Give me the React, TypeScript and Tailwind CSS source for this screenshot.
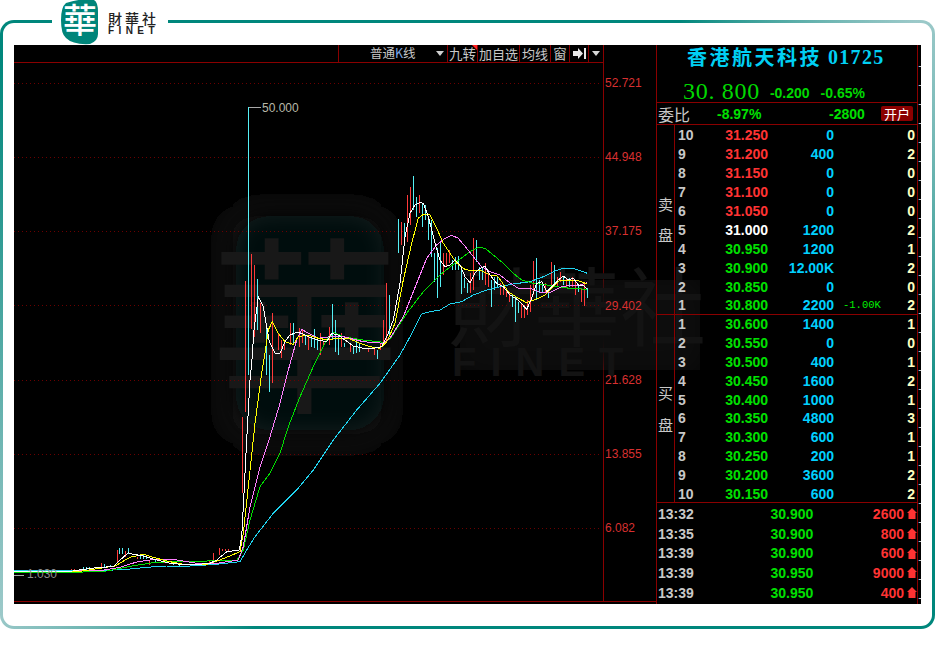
import React from "react";

type P = [number, number];
type C = [number, number, number, number];
const m = (ox: number, oy: number, pts: P[]): P[] => pts.map(([a, b]) => [ox + a / 3, oy + b / 3]);
const z5 = (p: P[]) => m(230, 170, p);
const z6 = (p: P[]) => m(390, 170, p);
const z7 = (p: P[]) => m(0, 510, p);
const z10 = (p: P[]) => m(200, 340, p);
const toStr = (p: P[]) => p.map(([a, b]) => `${a.toFixed(1)},${b.toFixed(1)}`).join(" ");

const white = [
  ...z7([[42,186],[220,183],[250,178],[300,172],[340,170],[355,155],[385,128],[400,133],[430,138],[470,150],[510,160],[570,165],[630,160],[650,150],[680,125],[718,120]]),
  ...z10([[125,590],[130,500],[140,300],[150,120]]),
  ...z5([[65,580],[72,480],[85,380],[100,410],[110,470],[118,515],[135,550],[150,550],[165,515],[180,495],[200,487],[215,490],[235,500],[265,510],[290,515],[305,490],[325,495],[345,510],[370,528],[400,535],[430,535],[455,530],[475,490]]),
  ...z6([[10,450],[30,340],[45,200],[60,130],[75,105],[90,97],[100,100],[115,140],[135,220],[150,270],[165,290],[180,285],[195,270],[210,285],[225,320],[240,338],[255,310],[270,295],[285,288],[300,315],[320,340],[340,350],[360,375],[385,390],[410,418],[425,385],[440,340],[455,335],[470,365],[485,350],[505,330],[520,318],[535,330],[550,325],[565,345],[580,345],[592,358]]),
];
const yellow = [
  ...z7([[42,186],[240,184],[300,175],[345,168],[390,142],[430,133],[470,145],[510,155],[560,165],[620,163],[660,150],[720,125]]),
  ...z10([[130,580],[145,440],[165,250],[185,100]]),
  ...z5([[105,550],[115,480],[127,455],[145,490],[165,515],[190,523],[205,500],[235,495],[265,505],[295,510],[320,505],[355,505],[390,520],[420,530],[450,535],[470,515]]),
  ...z6([[0,495],[15,460],[40,330],[65,220],[85,145],[100,133],[120,135],[140,175],[160,220],[180,250],[200,280],[225,298],[245,303],[270,300],[290,310],[300,315],[320,316],[335,335],[355,365],[385,385],[410,398],[425,392],[445,385],[465,375],[485,355],[510,330],[530,330],[565,332],[592,342]]),
];
const pink = [
  ...z7([[42,186],[300,182],[360,172],[410,156],[470,147],[530,150],[590,160],[650,160],[715,150]]),
  ...z10([[130,620],[150,500],[180,380],[210,290],[240,190],[265,90],[290,0]]),
  ...z5([[215,478],[235,490],[265,505],[300,500],[340,500],[400,515],[460,520]]),
  ...z6([[0,505],[40,440],[80,340],[110,265],[140,225],[165,205],[185,196],[205,205],[230,235],[250,260],[275,290],[300,305],[330,315],[355,335],[385,355],[420,355],[450,367],[480,368],[510,352],[540,345],[570,345],[592,338]]),
];
const green = [
  ...z7([[42,186],[250,186],[320,183],[400,167],[460,158],[540,153],[620,153],[710,152]]),
  ...z10([[130,630],[150,540],[180,440],[210,400],[240,340],[265,260],[300,170],[340,80],[380,0]]),
  ...z5([[300,500],[310,487],[340,500],[400,510],[460,517]]),
  ...z6([[0,507],[50,430],[100,365],[150,315],[200,275],[240,245],[265,232],[285,235],[310,255],[340,280],[370,310],[395,330],[430,340],[470,345],[500,350],[540,355],[592,358]]),
];
const cyan = [
  ...z7([[42,183],[300,182],[380,178],[440,172],[500,168],[570,168],[650,163],[720,155]]),
  ...z10([[140,630],[165,590],[220,520],[290,450],[340,390],[400,300],[470,210],[540,130],[600,45]]),
  ...z6([[55,510],[95,432],[120,425],[150,420],[180,402],[215,395],[250,375],[290,360],[330,350],[370,342],[420,335],[460,320],[490,305],[520,295],[550,295],[592,310]]),
];

const c5: C[] = [[46,333,690,0],[64,252,478,0],[73,285,500,0],[82,327,480,1],[91,400,488,0],[109,478,615,1],[118,555,665,1],[127,430,640,0],[145,490,540,0],[154,510,565,0],[163,515,540,0],[181,460,525,0],[190,460,520,1],[208,475,530,0],[217,480,520,0],[226,495,525,1],[235,495,540,0],[244,500,530,1],[253,478,535,1],[262,510,540,1],[271,490,555,0],[280,515,530,0],[298,470,525,0],[307,402,510,1],[316,450,545,1],[325,500,555,1],[334,490,530,0],[343,520,530,1],[361,525,545,0],[370,530,553,1],[379,515,548,1],[388,520,545,1],[415,535,545,0],[433,530,555,0],[442,540,567,1],[451,520,540,0],[460,450,520,0],[469,340,510,0],[478,375,500,1]];
const c6: C[] = [[7,305,385,0],[16,135,275,0],[25,148,250,1],[34,155,225,0],[43,160,215,1],[52,75,215,0],[61,50,165,0],[70,18,120,1],[79,80,140,1],[88,75,130,0],[97,100,170,1],[106,105,150,1],[115,140,210,1],[124,150,260,1],[133,250,335,1],[142,235,383,1],[151,220,350,1],[160,248,315,0],[169,250,290,0],[178,240,280,0],[187,270,300,1],[196,260,300,1],[205,258,300,1],[214,295,372,1],[223,325,355,1],[232,340,370,1],[241,310,370,0],[250,205,360,0],[259,210,275,1],[268,290,330,1],[277,290,330,1],[286,278,345,0],[295,310,350,0],[304,330,412,1],[313,320,360,1],[322,320,355,1],[331,340,375,0],[340,350,375,0],[349,355,380,0],[358,365,395,0],[367,375,410,1],[376,380,455,1],[385,395,430,1],[394,400,445,0],[403,405,445,0],[412,390,435,0],[421,345,425,0],[430,272,375,0],[439,265,390,1],[448,330,370,1],[457,335,365,1],[466,340,370,0],[475,360,385,1],[484,275,345,0],[493,285,350,1],[502,320,350,0],[511,305,335,0],[520,320,345,1],[529,325,350,0],[538,325,350,1],[547,320,350,0],[556,335,375,0],[565,345,365,1],[574,355,395,0],[583,340,407,0],[592,355,385,1]];
const c7: C[] = [[214,178,186,0],[223,178,186,0],[250,172,180,1],[259,172,180,1],[268,172,180,1],[304,158,175,0],[313,162,170,1],[331,164,172,1],[350,120,160,0],[358,114,132,1],[367,114,132,1],[376,122,140,0],[385,114,132,1],[412,140,148,0],[421,136,146,1],[430,136,146,1],[439,138,146,1],[448,150,164,0],[466,148,156,1],[493,152,160,0],[520,160,166,1],[538,162,168,1],[600,160,166,1],[628,150,160,0],[638,130,152,0],[656,115,136,0],[665,118,122,0],[674,118,122,0],[683,118,122,0]];

const bars = [
  ...c7.map(([x, t, b, k]): C => [Math.round(x / 3) + 0.5, 510 + t / 3, 510 + b / 3, k]),
  ...c5.map(([x, t, b, k]): C => [Math.round(230 + x / 3) + 0.5, 170 + t / 3, 170 + b / 3, k]),
  ...c6.slice(2).map(([x, t, b, k]): C => [Math.round(390 + x / 3) + 0.5, 170 + t / 3, 170 + b / 3, k]),
  [242.5, 417, 493, 0] as C,
  [245.5, 340, 412, 0] as C,
  [248.5, 107, 375, 1] as C,
];

const axis = ["52.721", "44.948", "37.175", "29.402", "21.628", "13.855", "6.082"];
const gridY = [83.5, 157.5, 231.5, 305.5, 380.5, 454.5, 528.5];

const sell = [
  ["10", "31.250", "0", "", "0", "r"], ["9", "31.200", "400", "", "2", "r"], ["8", "31.150", "0", "", "0", "r"],
  ["7", "31.100", "0", "", "0", "r"], ["6", "31.050", "0", "", "0", "r"], ["5", "31.000", "1200", "", "2", "w"],
  ["4", "30.950", "1200", "", "1", "g"], ["3", "30.900", "12.00K", "", "2", "g"], ["2", "30.850", "0", "", "0", "g"],
  ["1", "30.800", "2200", "-1.00K", "2", "g"],
];
const buy = [
  ["1", "30.600", "1400", "", "1", "g"], ["2", "30.550", "0", "", "0", "g"], ["3", "30.500", "400", "", "1", "g"],
  ["4", "30.450", "1600", "", "2", "g"], ["5", "30.400", "1000", "", "1", "g"], ["6", "30.350", "4800", "", "3", "g"],
  ["7", "30.300", "600", "", "1", "g"], ["8", "30.250", "200", "", "1", "g"], ["9", "30.200", "3600", "", "2", "g"],
  ["10", "30.150", "600", "", "2", "g"],
];
const trades = [
  ["13:32", "30.900", "2600"], ["13:35", "30.900", "800"], ["13:39", "30.900", "600"], ["13:39", "30.950", "9000"], ["13:39", "30.950", "400"],
];

const NUM = "font-['Liberation_Sans',sans-serif] font-bold text-[14px] leading-none";
const CJK = "font-['Noto_Sans_CJK_SC',sans-serif]";

function Row({ r }: { r: string[] }) {
  const priceColor = r[5] === "r" ? "text-[#ff3333]" : r[5] === "w" ? "text-white" : "text-[#00e000]";
  return (
    <div className={`flex items-center h-[18.9px] ${NUM}`}>
      <div className="w-[50px] pl-[3px] text-[#c8c8c8]">{r[0]}</div>
      <div className={`w-[43px] text-right ${priceColor}`}>{r[1]}</div>
      <div className="w-[66px] text-right text-[#00d0ff]">{r[2]}</div>
      <div className="w-[50px] pl-[9px] font-['Liberation_Mono',monospace] font-normal text-[10.5px] text-[#00f000]">{r[3]}</div>
      <div className="flex-1 text-right pr-[2px] text-[#ffffc0]">{r[4]}</div>
    </div>
  );
}

function Side({ a, b, y1, y2 }: { a: string; b: string; y1: string; y2: string }) {
  return (
    <div className={`w-[18px] shrink-0 border-r border-[#8a0000] flex flex-col items-center text-[15px] leading-none text-[#c8c8c8] ${CJK} ${y1}`}>
      <div>{a}</div>
      <div className={y2}>{b}</div>
    </div>
  );
}

function Logo() {
  return (
    <div className="absolute left-[52px] top-0 w-[116px] h-[45px] bg-white flex pl-[9px] gap-[9px]">
      <svg width="38" height="45" viewBox="0 0 38 45" className="shrink-0">
        <path d="M5 3 Q20 -2 33 0 Q37 2 37 12 V34 Q37 41 29 44 Q12 45 5 38 Q0 34 0 20 Q0 7 5 3Z" fill="#00857a" />
        <text x="19" y="33" textAnchor="middle" fontSize="34" fontWeight="500" fill="#fff" fontFamily="'Noto Sans CJK TC', sans-serif">華</text>
      </svg>
      <div className="flex flex-col pt-[12px] text-[#222] w-[56px] shrink-0">
        <div className="font-['Noto_Sans_CJK_TC',sans-serif] font-medium text-[14px] leading-[13px] tracking-[3px] whitespace-nowrap">財華社</div>
        <div className="font-['Liberation_Sans',sans-serif] font-bold text-[10px] leading-[9px] tracking-[4.4px] whitespace-nowrap mt-[0.5px]">FINET</div>
      </div>
    </div>
  );
}

function Chart() {
  return (
    <svg width="589" height="539" viewBox="14 63 589 539" className="block overflow-visible">
      <defs>
        <filter id="wb" x="-40%" y="-40%" width="180%" height="180%"><feGaussianBlur stdDeviation="16" /></filter>
        <filter id="wb2" x="-30%" y="-30%" width="160%" height="160%"><feGaussianBlur stdDeviation="10" /></filter>
      </defs>
      <rect x="222" y="205" width="170" height="240" rx="30" fill="#121212" filter="url(#wb)" />
      <rect x="236" y="216" width="148" height="214" rx="34" fill="#020d0d" filter="url(#wb2)" />
      <rect x="460" y="280" width="240" height="90" fill="#0a0a0a" filter="url(#wb)" />
      <g fontFamily="'Noto Sans CJK TC', sans-serif" fontWeight="400" fill="#181818">
        <text x="305" y="398" textAnchor="middle" fontSize="190">華</text>
        <text x="448" y="340" fontSize="86" fill="#131313">財華社</text>
        <text x="452" y="376" fontSize="40" letterSpacing="14" fontWeight="700" fill="#131313" fontFamily="'Liberation Sans', sans-serif">FINET</text>
      </g>
      <g shapeRendering="crispEdges">
        {gridY.map((y) => (
          <line key={y} x1="14" x2="602" y1={y} y2={y} stroke="#6a0000" strokeDasharray="1 3" />
        ))}
        {bars.map(([x, t, b, k], i) => (
          <line key={i} x1={x} x2={x} y1={t} y2={b} stroke={k ? "#55f0f5" : "#ff3a3a"} />
        ))}
        <line x1="249" x2="261" y1="107.5" y2="107.5" stroke="#a8a8a8" />
        <line x1="14" x2="24" y1="575.5" y2="575.5" stroke="#a8a8a8" />
      </g>
      <g fill="none" strokeWidth="1" shapeRendering="crispEdges">
        <polyline points={toStr(cyan)} stroke="#20d4f0" />
        <polyline points={toStr(green)} stroke="#00e000" />
        <polyline points={toStr(pink)} stroke="#ff80ff" />
        <polyline points={toStr(yellow)} stroke="#ffff00" />
        <polyline points={toStr(white)} stroke="#ffffff" />
      </g>
      <g fontFamily="'Liberation Sans', sans-serif" fontSize="12">
        <text x="262" y="112" fill="#b8b8a8">50.000</text>
        <text x="27" y="578" fill="#8c8c8c">1.030</text>
      </g>
    </svg>
  );
}

function Toolbar() {
  const cell = "h-full shrink-0 whitespace-nowrap flex items-center justify-center border-l border-[#8a0000] text-[#c8c8c8] text-[13.5px] leading-none " + CJK;
  return (
    <div className="h-[18px] flex justify-end border-b border-[#8a0000]">
      <div className={`${cell} w-[109px] justify-start pl-[31px]`}>
        <span className="shrink-0 text-[12.5px]">普通<span className="text-[#7fa8e8]">K</span>线</span>
        <svg width="8" height="5" viewBox="0 0 8 5" className="ml-[20px] shrink-0"><path d="M0 0H8L4 5Z" fill="#d0d0d0" /></svg>
      </div>
      <div className={`${cell} w-[30px] relative`}>
        九转
        <svg width="5" height="5" viewBox="0 0 5 5" className="absolute right-0 top-0"><path d="M0 0H5V5Z" fill="#ff2020" /></svg>
      </div>
      <div className={`${cell} w-[42px] text-[13px]`}>加自选</div>
      <div className={`${cell} w-[31px] text-[13px]`}>均线</div>
      <div className={`${cell} w-[19px]`}>窗</div>
      <div className={`${cell} w-[19px]`}>
        <svg width="13" height="11" viewBox="0 0 13 11"><path d="M0 3H5V0L10 5.5L5 11V8H0Z M11 0H13V11H11Z" fill="#e8e8e8" /></svg>
      </div>
      <div className={`${cell} w-[15px]`}>
        <svg width="8" height="5" viewBox="0 0 8 5"><path d="M0 0H8L4 5Z" fill="#d8d8d8" /></svg>
      </div>
    </div>
  );
}

function RightPanel() {
  return (
    <div className="w-[262px] shrink-0 border-x border-[#8a0000] flex flex-col relative">
      <div className="h-[58px] border-b border-[#8a0000] flex flex-col">
        <div className="h-[24px] pl-[30px] flex items-center text-[#00d0f4] font-bold leading-none whitespace-nowrap">
          <span className={`${CJK} text-[20px] tracking-[2.5px]`}>香港航天科技</span>
          <span className="font-['Liberation_Serif',serif] text-[20px] tracking-[1.3px] ml-[6px]">01725</span>
        </div>
        <div className="h-[33px] pl-[26px] flex items-center text-[#00d800] whitespace-nowrap pt-[10px]">
          <span className="font-['Liberation_Serif',serif] text-[24px] tracking-[0.7px] leading-none">30. 800</span>
          <span className={`${NUM} text-[13px] ml-[10px] mt-[4px]`}>-0.200</span>
          <span className={`${NUM} text-[13px] ml-[11px] mt-[4px]`}>-0.65%</span>
        </div>
      </div>
      <div className="h-[22px] border-b border-[#8a0000] flex items-center relative">
        <div className={`${CJK} text-[16px] leading-none text-[#c8c8c8] w-[60px] pl-[1px]`}>委比</div>
        <div className={`${NUM} text-[13px] w-[112px] text-[#00e000]`}>-8.97%</div>
        <div className={`${NUM} text-[13px] w-[40px] text-[#00e000]`}>-2800</div>
        <div className={`${CJK} ml-[12px] w-[32px] h-[15px] rounded-[2px] bg-[#8b0000] text-white text-[13px] leading-[15px] text-center`}>开户</div>
      </div>
      <div className="h-[190px] border-b border-[#8a0000] flex">
        <Side a="卖" b="盘" y1="pt-[71px]" y2="mt-[16px]" />
        <div className="flex-1 mt-[1px]">{sell.map((r) => <Row key={r[0]} r={r} />)}</div>
      </div>
      <div className="h-[188px] border-b border-[#8a0000] flex">
        <Side a="买" b="盘" y1="pt-[70px]" y2="mt-[17px]" />
        <div className="flex-1 -mt-[0.5px]">{buy.map((r) => <Row key={r[0]} r={r} />)}</div>
      </div>
      <div className="flex-1 flex flex-col pt-[1px]">
        {trades.map((t, i) => (
          <div key={i} className={`h-[19.7px] flex items-center ${NUM}`}>
            <div className="w-[114px] pl-[1px] text-[#c8c8c8]">{t[0]}</div>
            <div className="w-[43px] text-[#00e000]">{t[1]}</div>
            <div className="w-[91px] text-right text-[#ff3333]">{t[2]}</div>
            <svg width="10" height="11" viewBox="0 0 10 11" className="ml-[3px] shrink-0"><path d="M5 0L10 5H8.5V11H1.5V5H0Z" fill="#ff3333" /></svg>
          </div>
        ))}
      </div>
    </div>
  );
}

export default function App() {
  return (
    <div className="relative w-[935px] h-[649px] bg-white pt-[20px]">
      <div className="h-[609px] rounded-[14px] p-[3px] bg-[conic-gradient(#00877c_0deg,#00877c_35deg,#9cc9c9_56deg,#00877c_105deg,#00877c_215deg,#9cc9c9_238deg,#00877c_300deg,#00877c_360deg)]">
        <div className="h-full rounded-[11px] bg-white pt-[22px] px-[11px] pb-[22px]">
          <div className="h-[559px] bg-black flex overflow-hidden">
            <div className="w-[642px] shrink-0">
              <div className="h-[557px] flex border-b border-[#8a0000]">
                <div className="w-[590px] shrink-0 border-r border-[#8a0000]">
                  <Toolbar />
                  <Chart />
                </div>
                <div className="flex-1 flex flex-col pt-[1px] font-['Liberation_Sans',sans-serif] text-[12px] text-[#d83030] relative">
                  {axis.map((a) => (
                    <div key={a} className="h-[74.2px] flex items-center pl-[1px] leading-none">{a}</div>
                  ))}
                </div>
              </div>
            </div>
            <RightPanel />
            <div className={`w-[3px] shrink-0 overflow-hidden flex flex-col text-[#c8c8c8] text-[14px] leading-[19px] pt-[12px] ${CJK}`}>
              {Array.from({ length: 29 }).map((_, i) => (
                <div key={i} className="whitespace-nowrap">十</div>
              ))}
            </div>
          </div>
        </div>
      </div>
      <Logo />
    </div>
  );
}
